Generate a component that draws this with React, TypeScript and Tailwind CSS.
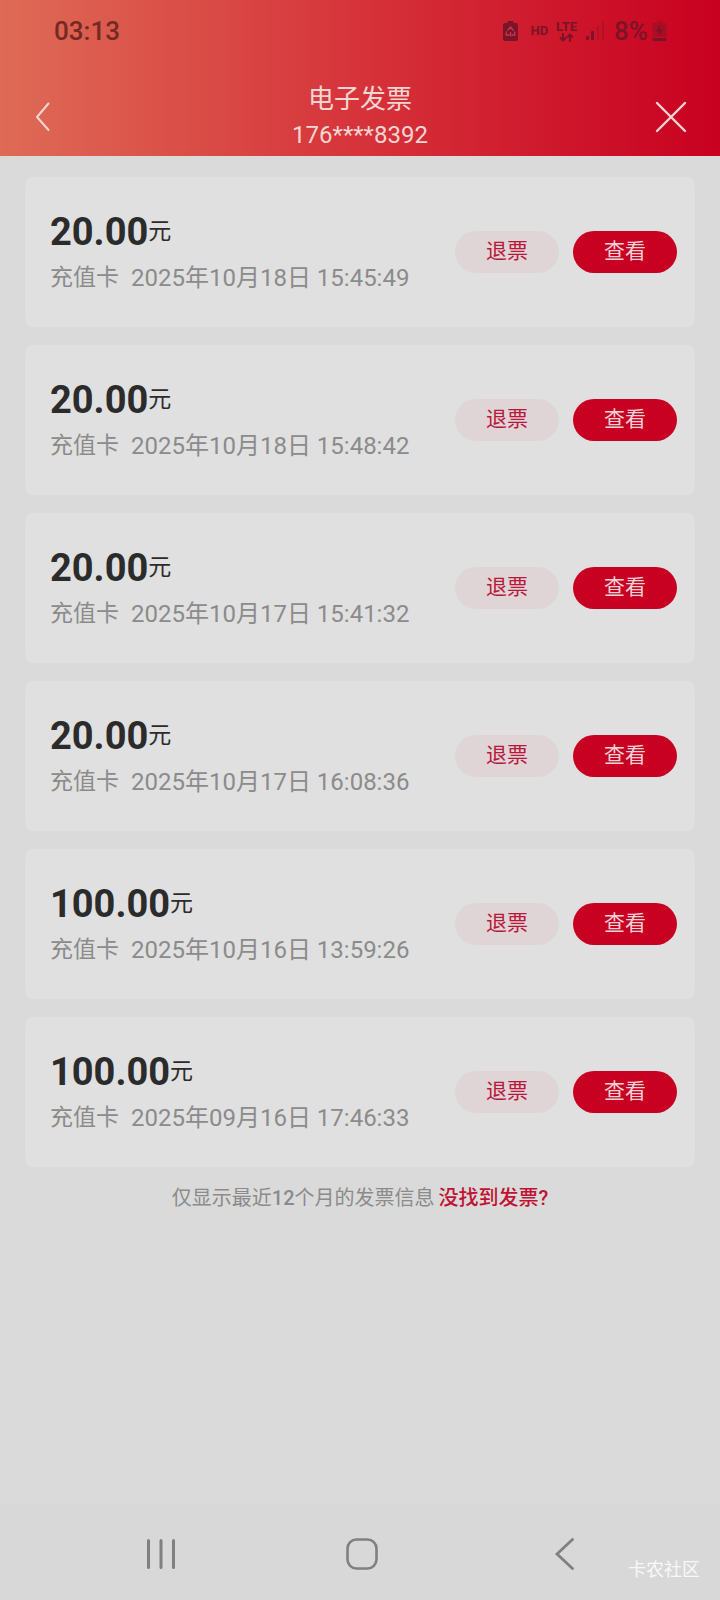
type Invoice = {
  amount: string
  kind: string
  date: string
}

const INVOICES: Invoice[] = [
  { amount: '20.00', kind: '充值卡', date: '2025年10月18日 15:45:49' },
  { amount: '20.00', kind: '充值卡', date: '2025年10月18日 15:48:42' },
  { amount: '20.00', kind: '充值卡', date: '2025年10月17日 15:41:32' },
  { amount: '20.00', kind: '充值卡', date: '2025年10月17日 16:08:36' },
  { amount: '100.00', kind: '充值卡', date: '2025年10月16日 13:59:26' },
  { amount: '100.00', kind: '充值卡', date: '2025年09月16日 17:46:33' },
]

function StatusBar() {
  return (
    <div className="flex h-[62px] items-center justify-between pl-[54px] pr-[53px]">
      <span className="text-[26px] leading-8 font-medium text-[#742a24]">03:13</span>
      <div className="flex items-center text-[#7a1426]">
        {/* Battery saver */}
        <svg className="mr-3" width="15" height="20" viewBox="0 0 15 20" fill="none">
          <path d="M4.5 0h6v2H13a2 2 0 0 1 2 2v14a2 2 0 0 1-2 2H2a2 2 0 0 1-2-2V4a2 2 0 0 1 2-2h2.500z" fill="currentColor" />
          <path d="M4.500 9.500l3-3.500 3 3.500M3.500 10.500l-.5 3.500h3.500M11.500 10.500l.5 3.500H8.500M7.500 11v4.500" stroke="#c03a4c" strokeWidth="1.300" />
        </svg>
        <span className="mr-2 text-[13px] leading-4 font-bold">HD</span>
        <span className="mr-2 flex flex-col items-center">
          <span className="text-[13px] leading-3 font-bold">LTE</span>
          <svg width="15" height="9" viewBox="0 0 15 9" fill="none" stroke="currentColor" strokeWidth="2">
            <path d="M4 0v7.500M1 4.500l3 3 3-3M11 9V1.500M8 4.500l3-3 3 3" />
          </svg>
        </span>
        <svg className="mr-2.5" width="19" height="20" viewBox="0 0 19 20" fill="currentColor">
          <rect x="1" y="15" width="3" height="4" rx="1" />
          <rect x="6" y="10" width="3" height="9" rx="1" />
          <rect x="12" y="5" width="2" height="14" rx="1" opacity="0.35" />
          <rect x="17" y="0" width="2" height="19" rx="1" opacity="0.35" />
        </svg>
        <span className="mr-1 text-[26px] leading-8 font-medium">8%</span>
        {/* Battery, charging */}
        <svg width="15" height="20" viewBox="0 0 15 20">
          <path d="M4.500 0h6v2H13a1.500 1.500 0 0 1 1.500 1.500V16H.500V3.500A1.500 1.500 0 0 1 2 2h2.500z" fill="currentColor" opacity="0.4" />
          <path d="M8.500 4L3.500 10.500H7L6.500 15l5-6.500H8z" fill="currentColor" />
          <path d="M.500 17h14v1.500a1.500 1.500 0 0 1-1.500 1.500H2A1.500 1.500 0 0 1 .500 18.500z" fill="currentColor" />
        </svg>
      </div>
    </div>
  )
}

function Header() {
  return (
    <header className="bg-linear-to-r/srgb from-[#de6b56] via-[#d6333a] to-[#c80020]">
      <StatusBar />
      <div className="flex h-[94px] items-center justify-between px-[33px] pt-[15px] text-[#f3d6d3]">
        <button aria-label="返回" className="flex w-8 items-center">
          <svg width="20" height="30" viewBox="0 0 20 30" fill="none" stroke="currentColor" strokeWidth="2" strokeLinecap="round" strokeLinejoin="round">
            <path d="M15.500 1.500L4 15l11.500 13" />
          </svg>
        </button>
        <div className="flex flex-col items-center">
          <h1 className="text-[26px] leading-9">电子发票</h1>
          <p className="text-[24px] leading-9">176****8392</p>
        </div>
        <button aria-label="关闭" className="flex w-8 items-center justify-center">
          <svg width="32" height="32" viewBox="0 0 32 32" fill="none" stroke="currentColor" strokeWidth="2.400" strokeLinecap="round">
            <path d="M2 2l28 28M30 2L2 30" />
          </svg>
        </button>
      </div>
    </header>
  )
}

function InvoiceCard({ invoice }: { invoice: Invoice }) {
  return (
    <li className="flex h-[150px] items-center justify-between rounded-lg bg-[#e0e0e0] pl-[25px] pr-[18px]">
      <div className="pt-1.5">
        <div className="flex items-center leading-[46px] text-[#2b2b2b]">
          <span className="text-[38px] font-bold">{invoice.amount}</span>
          <span className="text-[23px]">元</span>
        </div>
        <div className="flex gap-3 text-[24px] leading-[46px] text-[#8b8b8b]">
          <span className="text-[23px]">{invoice.kind}</span>
          <time>{invoice.date}</time>
        </div>
      </div>
      <div className="flex gap-3.5 text-[21px] leading-[38px]">
        <button className="h-[42px] w-[104px] rounded-full bg-[#dfd5d7] pb-0.5 text-[#b9183a]">退票</button>
        <button className="h-[42px] w-[104px] rounded-full bg-[#c80021] pb-0.5 text-[#f0d3d7]">查看</button>
      </div>
    </li>
  )
}

function NavBar() {
  return (
    <nav className="relative grid h-24 grid-cols-3 place-items-center bg-[#d8d8d8] pt-1 pl-[60px] pr-[55px] text-[#808080]">
      <button aria-label="最近任务">
        <svg width="32" height="32" viewBox="0 0 32 32" stroke="currentColor" strokeWidth="3" strokeLinecap="round">
          <path d="M3.500 2.500v27M16 2.500v27M28.500 2.500v27" />
        </svg>
      </button>
      <button aria-label="主页">
        <svg width="32" height="32" viewBox="0 0 32 32" fill="none" stroke="currentColor" strokeWidth="2.600">
          <rect x="1.500" y="1.500" width="29" height="29" rx="9" />
        </svg>
      </button>
      <button aria-label="返回上一页">
        <svg width="32" height="32" viewBox="0 0 32 32" fill="none" stroke="currentColor" strokeWidth="2.800" strokeLinecap="round">
          <path d="M24.500 1.500L9 16l15.500 14.500" />
        </svg>
      </button>
      <span className="absolute right-5 bottom-4 text-[18px] leading-7 text-[#f8f8f8]">卡农社区</span>
    </nav>
  )
}

export default function App() {
  return (
    <div className="flex min-h-screen flex-col bg-[#dadada] font-[Roboto,'Noto_Sans_CJK_SC',sans-serif]">
      <Header />
      <main className="flex-1 px-[25px] pt-[21px]">
        <ul className="flex flex-col gap-[18px]">
          {INVOICES.map(invoice => (
            <InvoiceCard key={invoice.date} invoice={invoice} />
          ))}
        </ul>
        <p className="flex justify-center gap-1 pt-[17px] text-[20px] leading-7 text-[#8b8b8b]">
          <span>仅显示最近<span className="font-medium">12</span>个月的发票信息</span>
          <a href="#help" className="font-medium text-[#c01232]">没找到发票?</a>
        </p>
      </main>
      <NavBar />
    </div>
  )
}
